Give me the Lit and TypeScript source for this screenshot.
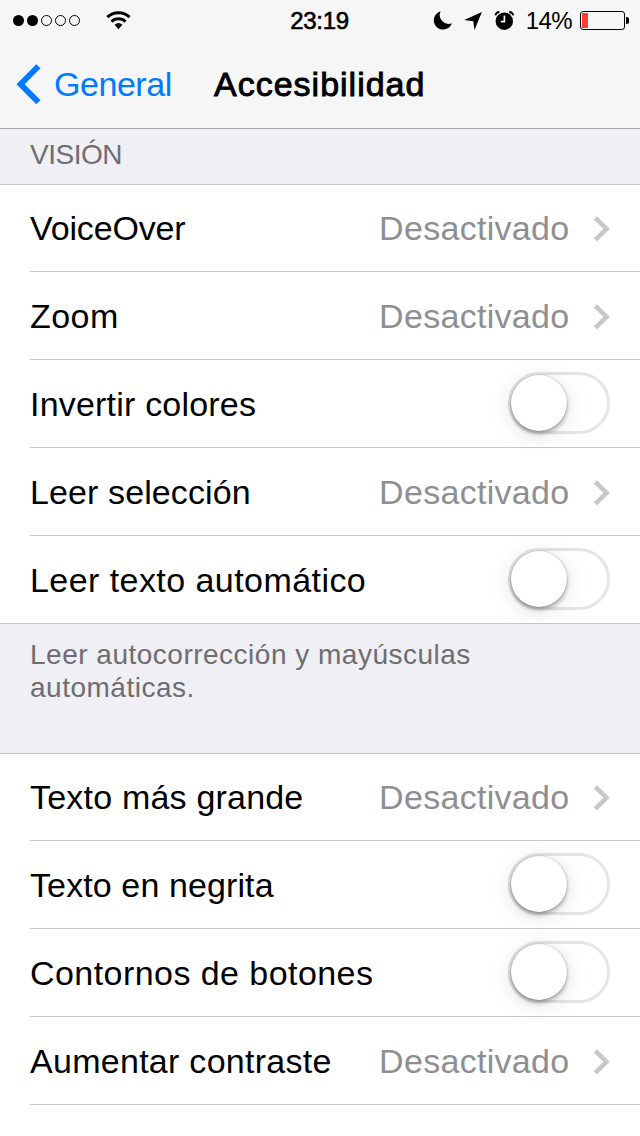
import { LitElement, html, svg, css } from "lit";
import { customElement, property } from "lit/decorators.js";

interface Setting {
  label: string;
  kind: "link" | "switch";
  tone: string;
}

const VISION: Setting[] = [
  { label: "VoiceOver", kind: "link", tone: "narrow" },
  { label: "Zoom", kind: "link", tone: "wide" },
  { label: "Invertir colores", kind: "switch", tone: "normal" },
  { label: "Leer selección", kind: "link", tone: "slight" },
  { label: "Leer texto automático", kind: "switch", tone: "wide" },
];

const TEXT: Setting[] = [
  { label: "Texto más grande", kind: "link", tone: "normal" },
  { label: "Texto en negrita", kind: "switch", tone: "slight" },
  { label: "Contornos de botones", kind: "switch", tone: "wide" },
  { label: "Aumentar contraste", kind: "link", tone: "medium" },
];

@customElement("status-bar")
export class StatusBar extends LitElement {
  static styles = css`
    :host {
      display: grid;
      grid-template-columns: 1fr auto 1fr;
      align-items: center;
      height: 41px;
      padding: 0 11px 0 13px;
      font-size: 24px;
      line-height: 28px;
    }
    svg { display: block; flex: none; }
    .left { display: flex; align-items: center; gap: 25px; }
    .right { display: flex; align-items: center; justify-content: flex-end; }
    .time { letter-spacing: -0.3px; margin-right: 3px; -webkit-text-stroke: 0.6px #000; }
    .moon { margin-right: 12px; }
    .arrow { margin-right: 12px; }
    .alarm { margin-right: 12px; }
    .percent { letter-spacing: -0.6px; margin-right: 8px; }
  `;

  render() {
    return html`
      <div class="left">
        <svg width="68" height="13" viewBox="0 0 68 13">
          ${[0, 1, 2, 3, 4].map((i) =>
            i < 2
              ? svg`<circle cx=${5.5 + i * 14} cy="6.5" r="5.5"/>`
              : svg`<circle cx=${5.5 + i * 14} cy="6.5" r="5" fill="none" stroke="#000" stroke-width="1"/>`
          )}
        </svg>
        <svg width="25" height="19" viewBox="0 0 25 19">
          <g fill="none" stroke="#000">
            <path d="M1.4 6.2A16 16 0 0 1 23.6 6.2" stroke-width="3"/>
            <path d="M5.5 10.6A10 10 0 0 1 19.5 10.6" stroke-width="2.9"/>
          </g>
          <path d="M12.5 18.2 8.6 13.7a6 6 0 0 1 7.8 0Z"/>
        </svg>
      </div>
      <div class="time">23:19</div>
      <div class="right">
        <svg class="moon" width="19" height="19" viewBox="0 0 19 19">
          <path d="M7.6.3A9.3 9.3 0 1 0 18.9 12.2 8.8 8.8 0 0 1 7.6.3Z"/>
        </svg>
        <svg class="arrow" width="18" height="18" viewBox="0 0 18 18">
          <path d="M17.9 0 10.5 17.9 9.3 9.3.2 7.9Z"/>
        </svg>
        <svg class="alarm" width="20" height="19" viewBox="0 0 20 19">
          <circle cx="10.3" cy="10.2" r="8.7"/>
          <path d="M10.4 4.6V10.6H6.8" fill="none" stroke="#f6f6f6" stroke-width="1.7"/>
          <path d="M1.3 4.4C1.7 2.4 3.2 1.1 5.4 1M19.3 4.4C18.9 2.4 17.4 1.1 15.2 1" fill="none" stroke="#000" stroke-width="1.8"/>
        </svg>
        <span class="percent">14%</span>
        <svg width="49" height="19" viewBox="0 0 49 19">
          <rect x=".5" y=".5" width="44" height="18" rx="2.6" fill="none" stroke="#000"/>
          <rect x="2" y="2" width="6" height="15" fill="#ff3b30"/>
          <path d="M46 6a3.5 3.5 0 0 1 0 7Z"/>
        </svg>
      </div>
    `;
  }
}

@customElement("setting-row")
export class SettingRow extends LitElement {
  @property() label = "";
  @property() kind = "link";
  @property() tone = "";

  static styles = css`
    :host { display: block; padding-left: 30px; }
    .row {
      display: flex;
      align-items: center;
      height: 88px;
      padding-right: 30px;
      box-sizing: border-box;
      box-shadow: inset 0 -1px #c8c7cc;
      font-size: 34px;
      line-height: 40px;
      white-space: nowrap;
    }
    .label { flex: 1; }
    .narrow { letter-spacing: -0.15px; }
    .slight { letter-spacing: 0.11px; }
    .normal { letter-spacing: 0.2px; }
    .medium { letter-spacing: 0.28px; }
    .wide { letter-spacing: 0.44px; }
    .value { color: #8e8e93; letter-spacing: 0.3px; margin-right: 23.5px; }
    .chevron { display: block; margin-top: 1px; }
    .switch {
      width: 102px;
      height: 62px;
      margin-bottom: 2px;
      box-sizing: border-box;
      border: 3px solid #e5e5e5;
      border-radius: 31px;
    }
    .knob {
      width: 56px;
      height: 56px;
      border-radius: 50%;
      background: #fff;
      box-shadow: 0 0 1px 0.5px rgba(0, 0, 0, 0.18), 0 3px 4px rgba(0, 0, 0, 0.28), 0 4px 24px rgba(0, 0, 0, 0.12);
    }
  `;

  render() {
    return html`
      <div class="row">
        <span class="label ${this.tone}">${this.label}</span>
        ${this.kind === "link"
          ? html`<span class="value">Desactivado</span>
              <svg class="chevron" width="17" height="26" viewBox="0 0 17 26">
                <path d="M2.3 1.8 13.6 12.8 2.3 23.8" fill="none" stroke="#c7c7cc" stroke-width="4.6"/>
              </svg>`
          : html`<div class="switch"><div class="knob"></div></div>`}
      </div>
    `;
  }
}

@customElement("app-root")
export class AppRoot extends LitElement {
  static styles = css`
    :host {
      display: block;
      height: 1136px;
      overflow: hidden;
      background: #efeff4;
      color: #000;
      font-family: "Liberation Sans", Arial, sans-serif;
    }
    .bar {
      height: 129px;
      box-sizing: border-box;
      background: #f6f6f6;
      border-bottom: 1px solid #a7a7aa;
    }
    .nav {
      display: flex;
      align-items: center;
      height: 86px;
      padding-left: 16px;
      font-size: 34px;
      line-height: 40px;
    }
    .nav svg { display: block; margin-right: 12px; }
    .back { width: 160px; color: #007aff; letter-spacing: -0.45px; }
    .title { letter-spacing: 1px; -webkit-text-stroke: 0.9px #000; }
    .heading, .note { color: #6d6d72; font-size: 28px; line-height: 33px; padding-left: 30px; box-sizing: border-box; }
    .heading { height: 55px; padding-top: 9px; letter-spacing: -0.5px; }
    .note { height: 129px; padding-top: 14px; letter-spacing: 0.5px; }
    .group { background: #fff; box-shadow: inset 0 1px #c8c7cc, inset 0 -1px #c8c7cc; }
    .more { height: 31px; background: #fff; }
    .open { box-shadow: inset 0 1px #c8c7cc; }
  `;

  private rows(items: Setting[]) {
    return items.map((s) => html`<setting-row .label=${s.label} .kind=${s.kind} .tone=${s.tone}></setting-row>`);
  }

  render() {
    return html`
      <header class="bar">
        <status-bar></status-bar>
        <nav class="nav">
          <svg width="26" height="42" viewBox="0 0 26 42">
            <path d="M22.4 3.2 4.6 21.2 22.4 39.2" fill="none" stroke="#007aff" stroke-width="5.9"/>
          </svg>
          <span class="back">General</span>
          <span class="title">Accesibilidad</span>
        </nav>
      </header>
      <div class="heading">VISIÓN</div>
      <section class="group">${this.rows(VISION)}</section>
      <div class="note">Leer autocorrección y mayúsculas<br />automáticas.</div>
      <section class="group open">
        ${this.rows(TEXT)}
        <div class="more"></div>
      </section>
    `;
  }
}
